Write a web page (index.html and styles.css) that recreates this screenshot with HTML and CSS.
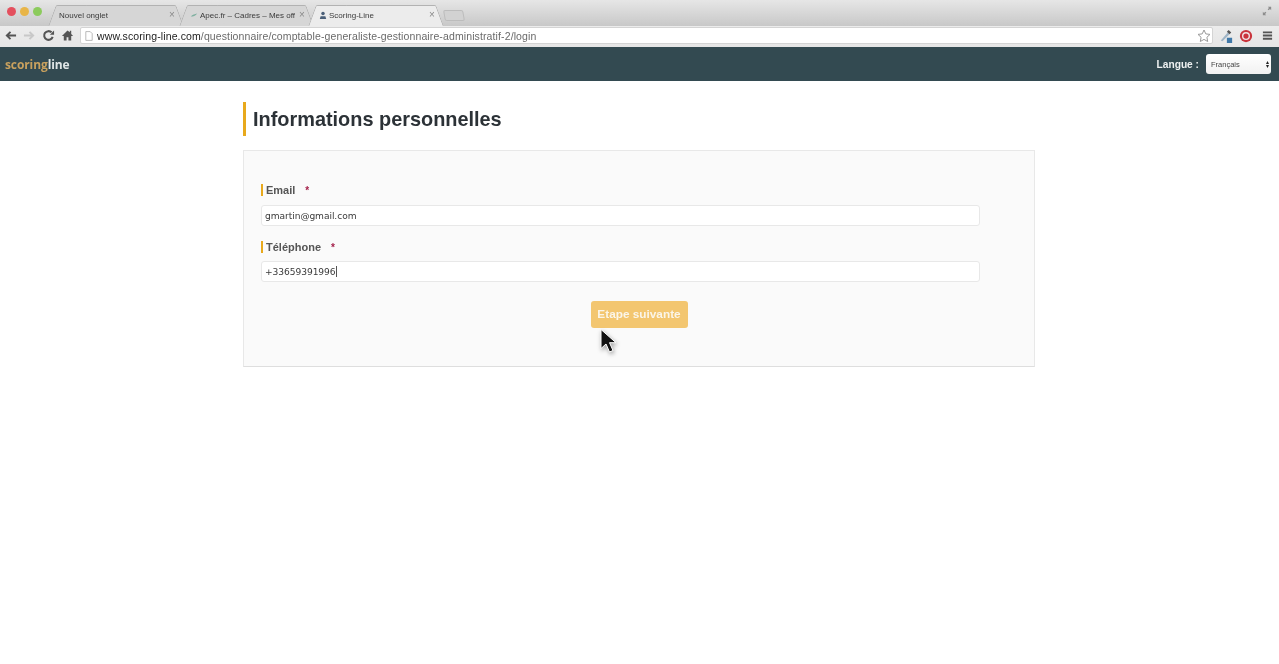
FILE: index.html
```html
<!DOCTYPE html>
<html lang="fr">
<head>
<meta charset="utf-8">
<title>Scoring-Line</title>
<link rel="stylesheet" href="styles.css">
</head>
<body>
<header class="chrome">
  <div class="tabstrip">
    <div class="lights">
      <span class="light red"></span><span class="light amber"></span><span class="light green"></span>
    </div>
    <div class="tabs">
      <div class="tab tab-first"><span class="tab-title">Nouvel onglet</span><span class="tab-x">×</span></div>
      <div class="tab tab-second">
        <svg class="favicon" viewBox="0 0 10 10"><path d="M1 7 C3 4 6 4 9 3 C7 6 4 7 1 7Z" fill="#7fb0a0"/></svg>
        <span class="tab-title tab-fade">Apec.fr – Cadres – Mes off</span><span class="tab-x">×</span>
      </div>
      <div class="tab tab-active">
        <svg class="favicon" viewBox="0 0 10 10"><circle cx="5" cy="3" r="2.2" fill="#4a5f78"/><path d="M1 10 L2 6.5 H8 L9 10Z" fill="#4a5f78"/></svg>
        <span class="tab-title">Scoring-Line</span><span class="tab-x">×</span>
      </div>
      <div class="tab-new"></div>
    </div>
    <svg class="fullscreen" viewBox="0 0 12 12"><path d="M7 1h4v4l-1.400-1.400L8 5.200 6.800 4 8.400 2.400ZM5 11H1V7l1.400 1.400L4 6.800 5.200 8 3.600 9.600Z" fill="#8d8d8d"/></svg>
  </div>
  <div class="toolbar">
    <svg class="tool" viewBox="0 0 14 14"><path d="M7 3L3 7l4 4M3.500 7H13" fill="none" stroke="#555" stroke-width="2"/></svg>
    <svg class="tool" viewBox="0 0 14 14"><path d="M7 3l4 4-4 4M10.500 7H1" fill="none" stroke="#c8c8c8" stroke-width="2"/></svg>
    <svg class="tool" viewBox="0 0 14 14"><path d="M11.500 8.500A4.700 4.700 0 1 1 10.300 3.600" fill="none" stroke="#555" stroke-width="2.200"/><path d="M8.500 6.300H13V1.500Z" fill="#555"/></svg>
    <svg class="tool" viewBox="0 0 14 14"><path d="M7 1.500L1 7.500h2v5h3v-3.500h2v3.500h3v-5h2l-2-2V2H9.500v1.500Z" fill="#555"/></svg>
    <div class="omnibox">
      <svg class="page-icon" viewBox="0 0 10 12"><path d="M1 .5h5.500l2.500 2.500v8.500H1Z" fill="#fff" stroke="#aaa"/></svg>
      <span class="url"><span class="url-host">www.scoring-line.com</span>/questionnaire/comptable-generaliste-gestionnaire-administratif-2/login</span>
      <svg class="star" viewBox="0 0 14 14"><path d="M7 1l1.800 3.900 4.200.5-3.100 2.900.8 4.200L7 10.400l-3.700 2.100.8-4.200L1 5.400l4.200-.5Z" fill="#fff" stroke="#999"/></svg>
    </div>
    <svg class="ext" viewBox="0 0 16 16"><path d="M2 13L10 4l2 2-8 8Z" fill="#9fb4c6"/><path d="M9 3l2-2 3 3-2 2Z" fill="#555"/><rect x="9" y="10" width="6" height="6" fill="#3f78a8"/></svg>
    <svg class="ext" viewBox="0 0 16 16"><circle cx="8" cy="8" r="7" fill="#c9343c"/><circle cx="8" cy="8" r="4.600" fill="#f1e4e4"/><circle cx="8" cy="8" r="3" fill="#c9343c"/></svg>
    <svg class="menu" viewBox="0 0 12 12"><path d="M1 1.500h10v2H1ZM1 5h10v2H1ZM1 8.500h10v2H1Z" fill="#555"/></svg>
  </div>
</header>

<nav class="navbar">
  <div class="logo"><span class="logo-a">scoring</span><span class="logo-b">line</span></div>
  <div class="lang">
    <span class="lang-label">Langue :</span>
    <div class="lang-select"><span>Français</span><span class="arrows"><i>▴</i><i>▾</i></span></div>
  </div>
</nav>

<main class="content">
  <h1 class="title">Informations personnelles</h1>
  <form class="card">
    <div class="field">
      <div class="label"><span>Email</span><span class="req">*</span></div>
      <div class="input">gmartin@gmail.com</div>
    </div>
    <div class="field">
      <div class="label"><span>Téléphone</span><span class="req">*</span></div>
      <div class="input input-tight">+33659391996<span class="caret"></span></div>
    </div>
    <div class="actions"><div class="next">Etape suivante</div></div>
  </form>
</main>

<svg class="cursor" viewBox="0 0 18 26"><path d="M2 1v19l5-4.500 3.500 8 3.500-1.500-3.500-7.800H17Z" fill="#111" stroke="#fff" stroke-width="1"/></svg>
</body>
</html>
```
FILE: styles.css
```css
* { box-sizing: border-box; }
html, body { margin: 0; padding: 0; }
body {
  width: 1279px;
  height: 664px;
  overflow: hidden;
  background: #fff;
  position: relative;
  font-family: "Liberation Sans", Arial, sans-serif;
  color: #333;
  filter: blur(0.35px);
}

/* Browser chrome */
.chrome { height: 47px; display: flex; flex-direction: column; }
.tabstrip {
  height: 26px;
  display: flex;
  align-items: flex-start;
  background: linear-gradient(#e6e6e6, #c8c8c8);
  padding-left: 7px;
}
.lights { display: flex; gap: 4px; padding-top: 7px; width: 43px; flex: none; }
.light { width: 9px; height: 9px; border-radius: 50%; }
.red { background: #e4505e; }
.amber { background: #e8b548; }
.green { background: #8ccb5c; }

.tabs { display: flex; align-items: flex-end; height: 26px; flex: none; padding-top: 5px; }
.tab {
  position: relative;
  height: 21px;
  display: flex;
  align-items: center;
  padding: 0 0 1px 9px;
  font-size: 8px;
  color: #3a3a3a;
  z-index: 0;
}
.tab::before,
.tab::after {
  content: "";
  position: absolute;
  inset: 0;
  z-index: -1;
  background: #d6d6d6;
  border: 1px solid #b2b2b2;
  border-bottom: 0;
  border-radius: 2px 2px 0 0;
}
.tab::before { transform: skewX(-20deg); clip-path: inset(0 30% 0 0); }
.tab::after { transform: skewX(20deg); clip-path: inset(0 0 0 30%); }
.tab-first { width: 128px; margin-left: 2px; padding-left: 7px; }
.tab-second { width: 127px; margin-left: 3px; padding-left: 7px; }
.tab-active { width: 128px; margin-left: 2px; padding-left: 7px; }
.tab-active::before, .tab-active::after { background: #ececec; }
.favicon { width: 8px; height: 8px; margin-right: 2px; flex: none; }
.tab-title { flex: 1; white-space: nowrap; overflow: hidden; }
.tab-fade { color: #3a3a3a; }
.tab-x { width: 8px; margin-right: 3px; font-size: 10px; line-height: 10px; color: #8a8a8a; flex: none; }
.tab-new {
  width: 20px;
  height: 11px;
  margin: 0 0 5px 4px;
  background: #d2d2d2;
  border: 1px solid #bcbcbc;
  border-radius: 2px;
  transform: skewX(10deg);
}
.fullscreen { width: 10px; height: 10px; margin: 6px 7px 0 auto; flex: none; }

.toolbar {
  height: 21px;
  display: flex;
  align-items: center;
  background: linear-gradient(#ececec, #e6e6e6);
  padding: 0 0 2px 4px;
}
.tool { width: 13px; height: 13px; flex: none; margin-right: 6px; }
.omnibox {
  width: 1133px;
  height: 17px;
  display: flex;
  align-items: center;
  background: #fff;
  border: 1px solid #d4d4d4;
  border-radius: 2px;
  padding-left: 4px;
  font-size: 10.500px;
  color: #6a6a6a;
}
.page-icon { width: 8px; height: 10px; margin-right: 4px; flex: none; }
.url { flex: 1; white-space: nowrap; letter-spacing: 0.115px; }
.url-host { color: #222; }
.star { width: 14px; height: 14px; margin-right: 1px; flex: none; }
.ext { width: 14px; height: 14px; margin-left: 6px; flex: none; }
.menu { width: 11px; height: 11px; margin-left: 9px; flex: none; }

/* Site navbar */
.navbar {
  height: 34px;
  background: #334a51;
  display: flex;
  align-items: center;
  justify-content: space-between;
  padding: 0 8px 0 5px;
}
.logo { font-size: 12px; font-weight: 700; font-family: "Open Sans", "Liberation Sans", sans-serif; letter-spacing: -0.1px; }
.logo-a { color: #c9a15e; }
.logo-b { color: #dfe5e6; }
.lang { display: flex; align-items: center; gap: 7px; }
.lang-label { color: #eef1f1; font-size: 10.200px; font-weight: 700; }
.lang-select {
  width: 65px;
  height: 20px;
  background: linear-gradient(#fff, #f1f1f1);
  border-radius: 3px;
  display: flex;
  align-items: center;
  justify-content: space-between;
  padding: 0 2px 0 5px;
  font-size: 7.500px;
  color: #444;
}
.arrows { display: flex; flex-direction: column; font-size: 6px; line-height: 4px; color: #222; }
.arrows i { font-style: normal; }

/* Page */
.content { width: 792px; margin-left: 243px; padding-top: 21px; }
.title {
  margin: 0 0 14px;
  height: 34px;
  border-left: 3px solid #e8a91c;
  padding-left: 7px;
  font-size: 19.900px;
  line-height: 34px;
  font-weight: 700;
  color: #2c3237;
}
.card {
  height: 217px;
  background: #fafafa;
  border: 1px solid #e8e8e8;
  border-bottom-color: #dedede;
  padding: 33px 17px 0;
}
.field { width: 719px; margin-bottom: 15px; }
.label {
  display: flex;
  align-items: center;
  gap: 10px;
  height: 12px;
  border-left: 2px solid #e8a91c;
  padding-left: 3px;
  font-size: 11px;
  font-weight: 700;
  color: #555;
}
.req { color: #a4204a; font-size: 10px; }
.input {
  height: 21px;
  margin-top: 9px;
  background: #fff;
  border: 1px solid #e8e8e8;
  border-radius: 3px;
  padding-left: 3px;
  line-height: 20px;
  color: #3a3a3a;
  font-family: "DejaVu Sans", sans-serif;
  font-size: 9.100px;
  letter-spacing: -0.06px;
}
.input-tight { margin-top: 8px; }
.caret { display: inline-block; width: 1px; height: 11px; background: #555; vertical-align: -2px; }
.actions { display: flex; justify-content: center; padding-top: 4px; width: 756px; }
.next {
  width: 97px;
  height: 27px;
  background: #f3c670;
  border-radius: 3px;
  color: #fbf5e8;
  font-size: 11.800px;
  font-weight: 700;
  text-align: center;
  line-height: 26px;
}
.cursor {
  position: absolute;
  left: 599px;
  top: 328px;
  width: 18px;
  height: 27px;
  filter: drop-shadow(1px 2px 2px rgba(0,0,0,.35));
}
```
